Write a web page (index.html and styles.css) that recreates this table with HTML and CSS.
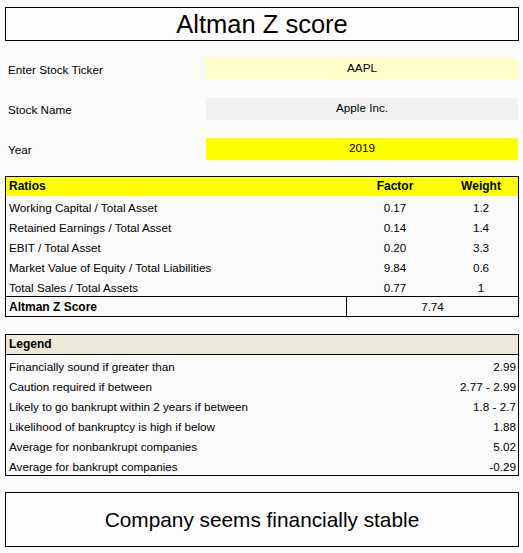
FILE: index.html
```html
<!DOCTYPE html>
<html>
<head>
<meta charset="utf-8">
<link rel="stylesheet" href="styles.css">
</head>
<body>
<div class="sheet">
  <div class="title">Altman Z score</div>

  <div class="fields">
    <div class="field"><span class="label">Enter Stock Ticker</span><span class="value ticker">AAPL</span></div>
    <div class="field"><span class="label">Stock Name</span><span class="value name">Apple Inc.</span></div>
    <div class="field"><span class="label">Year</span><span class="value year">2019</span></div>
  </div>

  <div class="ratios">
    <div class="rrow rhead"><span class="rlabel">Ratios</span><span class="num">Factor</span><span class="num">Weight</span></div>
    <div class="rrow"><span class="rlabel">Working Capital / Total Asset</span><span class="num">0.17</span><span class="num">1.2</span></div>
    <div class="rrow"><span class="rlabel">Retained Earnings / Total Asset</span><span class="num">0.14</span><span class="num">1.4</span></div>
    <div class="rrow"><span class="rlabel">EBIT / Total Asset</span><span class="num">0.20</span><span class="num">3.3</span></div>
    <div class="rrow"><span class="rlabel">Market Value of Equity / Total Liabilities</span><span class="num">9.84</span><span class="num">0.6</span></div>
    <div class="rrow"><span class="rlabel">Total Sales / Total Assets</span><span class="num">0.77</span><span class="num">1</span></div>
    <div class="rtotal"><span class="rlabel strong">Altman Z Score</span><span class="num score">7.74</span></div>
  </div>

  <div class="legend">
    <div class="lhead">Legend</div>
    <div class="lrow"><span>Financially sound if greater than</span><span>2.99</span></div>
    <div class="lrow"><span>Caution required if between</span><span>2.77 - 2.99</span></div>
    <div class="lrow"><span>Likely to go bankrupt within 2 years if between</span><span>1.8 - 2.7</span></div>
    <div class="lrow"><span>Likelihood of bankruptcy is high if below</span><span>1.88</span></div>
    <div class="lrow"><span>Average for nonbankrupt companies</span><span>5.02</span></div>
    <div class="lrow"><span>Average for bankrupt companies</span><span>-0.29</span></div>
  </div>

  <div class="verdict">Company seems financially stable</div>
</div>
</body>
</html>
```

FILE: styles.css
```css
html, body {
  margin: 0;
  padding: 0;
  background: #fbfbfb;
}

.sheet {
  width: 514px;
  padding: 7px 0 0 5px;
  font-family: "Liberation Sans", Arial, sans-serif;
  font-size: 11.7px;
  color: #000;
}

.title {
  height: 32px;
  border: 1px solid #000;
  display: flex;
  align-items: center;
  justify-content: center;
  font-size: 25.5px;
  background: #fdfdfd;
}

.fields {
  margin-top: 17px;
  display: flex;
  flex-direction: column;
  gap: 20px;
}

.field {
  display: grid;
  grid-template-columns: 201px 312px;
  height: 20px;
}

.label {
  padding-left: 3px;
  padding-top: 2px;
  line-height: 20px;
}

.value {
  text-align: center;
  line-height: 20px;
}

.ticker { background: #ffffcc; }
.name { background: #f2f2f2; }
.year { background: #ffff00; }

.ratios {
  margin-top: 18px;
  border: 1px solid #000;
}

.rrow {
  display: grid;
  grid-template-columns: 340px 98px 74px;
  height: 20px;
  line-height: 23px;
}

.rhead {
  height: 19px;
  line-height: 19px;
  background: #ffff00;
  font-weight: bold;
  font-size: 12px;
}

.rlabel {
  padding-left: 3px;
}

.num {
  text-align: center;
}

.rtotal {
  display: grid;
  grid-template-columns: 340px 172px;
  height: 19px;
  line-height: 20px;
  border-top: 1px solid #000;
}

.strong {
  font-weight: bold;
  font-size: 12px;
}

.score {
  border-left: 1px solid #000;
}

.legend {
  margin-top: 17px;
  border: 1px solid #000;
}

.lhead {
  height: 19px;
  line-height: 19px;
  background: #ece9d8;
  border-bottom: 1px solid #000;
  padding-left: 3px;
  font-weight: bold;
  font-size: 12px;
}

.lrow {
  display: flex;
  justify-content: space-between;
  height: 20px;
  line-height: 23px;
  padding: 0 2px 0 3px;
}

.verdict {
  margin-top: 16px;
  height: 53px;
  border: 1px solid #000;
  display: flex;
  align-items: center;
  justify-content: center;
  font-size: 20.8px;
  background: #fdfdfd;
}
```
